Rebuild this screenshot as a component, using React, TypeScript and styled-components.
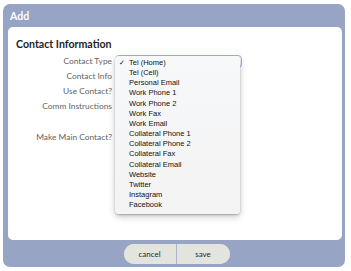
import React from "react";
import styled, { createGlobalStyle } from "styled-components";

const Global = createGlobalStyle`
  html, body { margin: 0; padding: 0; background: #ffffff; }
  body { font-family: Lato, "Open Sans", sans-serif; }
`;

const Page = styled.div`
  padding: 4px 6px 0 3px;
  width: 351px;
  height: 271px;
  box-sizing: border-box;
  overflow: hidden;
`;

const Frame = styled.div`
  width: 342px;
  height: 263px;
  background: #97a4c4;
  border-radius: 7px;
  display: flex;
  flex-direction: column;
  padding: 0 3px 0 5px;
  box-sizing: border-box;
`;

const Header = styled.div`
  height: 23px;
  display: flex;
  align-items: center;
  padding-left: 2px;
  color: #ffffff;
  font-family: Lato, sans-serif;
  font-weight: 700;
  font-size: 10.5px;
`;

const Panel = styled.div`
  height: 213px;
  background: #ffffff;
  border-radius: 5px;
  padding: 10px 8px 0 8px;
  box-sizing: border-box;
`;

const Heading = styled.div`
  font-family: Lato, sans-serif;
  font-weight: 700;
  font-size: 10.6px;
  line-height: 14px;
  color: #1e1e1e;
  margin-bottom: 3px;
`;

const Form = styled.div`
  display: grid;
  grid-template-columns: 96px 127px;
  column-gap: 3px;
`;

const Label = styled.div<{ $h?: number }>`
  height: ${(p) => p.$h ?? 15}px;
  line-height: 15px;
  text-align: right;
  font-family: Lato, sans-serif;
  font-size: 8.4px;
  color: #646464;
  white-space: nowrap;
`;

const Cell = styled.div<{ $h?: number }>`
  height: ${(p) => p.$h ?? 15}px;
  position: relative;
`;

const SelectBox = styled.div`
  position: absolute;
  left: 0;
  top: 1px;
  width: 127px;
  height: 13px;
  box-sizing: border-box;
  border: 1.5px solid #8fb6ec;
  border-radius: 4px;
  background: #fff;
`;

const Menu = styled.div`
  position: absolute;
  left: 0;
  top: 2px;
  width: 125px;
  height: 158px;
  box-sizing: border-box;
  padding-top: 2px;
  border-radius: 4px;
  background: linear-gradient(#f7f8fa, #f3f3f3);
  box-shadow: 0 1px 2px rgba(0, 0, 0, 0.25), 0 3px 7px rgba(0, 0, 0, 0.2);
  z-index: 5;
`;

const Item = styled.div`
  position: relative;
  height: 10.17px;
  line-height: 10.17px;
  padding-left: 14px;
  font-family: "Liberation Sans", Arial, sans-serif;
  font-size: 7.5px;
  color: #111111;
  white-space: nowrap;
`;

const Check = styled.span`
  position: absolute;
  left: 4px;
  top: 0;
  font-size: 7px;
`;

const Footer = styled.div`
  flex: 1;
  display: flex;
  align-items: center;
  justify-content: center;
  padding-left: 3px;
`;

const ButtonGroup = styled.div`
  display: flex;
  height: 20px;
  border-radius: 10px;
  overflow: hidden;
  background: #e4e4df;
`;

const Button = styled.button<{ $divider?: boolean }>`
  width: 53px;
  height: 20px;
  border: none;
  padding: 0;
  background: #e4e4df;
  font-family: Lato, sans-serif;
  font-size: 8px;
  color: #2a2a2a;
  border-right: ${(p) => (p.$divider ? "1px solid #a9b5cd" : "none")};
`;

const options = [
  "Tel (Home)",
  "Tel (Cell)",
  "Personal Email",
  "Work Phone 1",
  "Work Phone 2",
  "Work Fax",
  "Work Email",
  "Collateral Phone 1",
  "Collateral Phone 2",
  "Collateral Fax",
  "Collateral Email",
  "Website",
  "Twitter",
  "Instagram",
  "Facebook",
];

export default function App() {
  return (
    <>
      <Global />
      <Page>
        <Frame>
          <Header>Add</Header>
          <Panel>
            <Heading>Contact Information</Heading>
            <Form>
              <Label>Contact Type</Label>
              <Cell>
                <SelectBox />
                <Menu>
                  {options.map((o, i) => (
                    <Item key={o}>
                      {i === 0 && <Check>✓</Check>}
                      {o}
                    </Item>
                  ))}
                </Menu>
              </Cell>
              <Label>Contact Info</Label>
              <Cell />
              <Label>Use Contact?</Label>
              <Cell />
              <Label $h={31}>Comm Instructions</Label>
              <Cell $h={31} />
              <Label>Make Main Contact?</Label>
              <Cell />
            </Form>
          </Panel>
          <Footer>
            <ButtonGroup>
              <Button $divider>cancel</Button>
              <Button>save</Button>
            </ButtonGroup>
          </Footer>
        </Frame>
      </Page>
    </>
  );
}
